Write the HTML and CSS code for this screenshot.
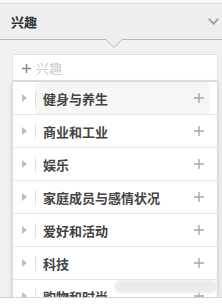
FILE: index.html
```html
<!DOCTYPE html>
<html lang="zh">
<head>
<meta charset="utf-8">
<link rel="stylesheet" href="styles.css">
</head>
<body>
<div class="screen">
  <div class="topgap"></div>
  <div class="header">
    <span class="title">兴趣</span>
    <svg class="chev" width="11" height="7" viewBox="0 0 11 7"><path d="M0.8 0.8 L5.5 5.6 L10.2 0.8" fill="none" stroke="#9a9a9a" stroke-width="1.8"/></svg>
  </div>
  <div class="content">
    <div class="input">
      <svg class="iplus" width="9" height="9" viewBox="0 0 9 9"><path d="M4.5 0 V9 M0 4.5 H9" stroke="#8a8a8a" stroke-width="1.6"/></svg>
      <span class="ph">兴趣</span>
    </div>
    <ul class="menu">
      <li class="item active"><span class="arrow"></span><span class="sep"></span><span class="label">健身与养生</span><svg class="add" width="10" height="10" viewBox="0 0 10 10"><path d="M5 0 V10 M0 5 H10" stroke="#a8a8a8" stroke-width="1.4"/></svg></li>
      <li class="item"><span class="arrow"></span><span class="sep"></span><span class="label">商业和工业</span><svg class="add" width="10" height="10" viewBox="0 0 10 10"><path d="M5 0 V10 M0 5 H10" stroke="#a8a8a8" stroke-width="1.4"/></svg></li>
      <li class="item"><span class="arrow"></span><span class="sep"></span><span class="label">娱乐</span><svg class="add" width="10" height="10" viewBox="0 0 10 10"><path d="M5 0 V10 M0 5 H10" stroke="#a8a8a8" stroke-width="1.4"/></svg></li>
      <li class="item"><span class="arrow"></span><span class="sep"></span><span class="label">家庭成员与感情状况</span><svg class="add" width="10" height="10" viewBox="0 0 10 10"><path d="M5 0 V10 M0 5 H10" stroke="#a8a8a8" stroke-width="1.4"/></svg></li>
      <li class="item"><span class="arrow"></span><span class="sep"></span><span class="label">爱好和活动</span><svg class="add" width="10" height="10" viewBox="0 0 10 10"><path d="M5 0 V10 M0 5 H10" stroke="#a8a8a8" stroke-width="1.4"/></svg></li>
      <li class="item"><span class="arrow"></span><span class="sep"></span><span class="label">科技</span><svg class="add" width="10" height="10" viewBox="0 0 10 10"><path d="M5 0 V10 M0 5 H10" stroke="#a8a8a8" stroke-width="1.4"/></svg></li>
      <li class="item"><span class="arrow"></span><span class="sep"></span><span class="label">购物和时尚</span><svg class="add" width="10" height="10" viewBox="0 0 10 10"><path d="M5 0 V10 M0 5 H10" stroke="#a8a8a8" stroke-width="1.4"/></svg></li>
    </ul>
  </div>
  <div class="blob"></div>
</div>
</body>
</html>
```

FILE: styles.css
```css
html, body {
  margin: 0;
  padding: 0;
  background: #ffffff;
  font-family: "Noto Sans CJK SC", "Noto Sans", sans-serif;
}

.screen {
  position: relative;
  height: 297px;
  overflow: hidden;
  background: #f1f1f1;
  border-bottom: 1px solid #d2d2d2;
}

.topgap {
  height: 3px;
  background: #f9f9f9;
  border-bottom: 1px solid #dcdcdc;
}

.header {
  position: relative;
  height: 35px;
  background: #eeeeee;
  border-bottom: 1px solid #b9b9b9;
  display: flex;
  align-items: center;
  justify-content: space-between;
  padding: 0 3px 0 11px;
}

.header::before {
  content: "";
  position: absolute;
  left: 105px;
  top: 35px;
  border-left: 9px solid transparent;
  border-right: 9px solid transparent;
  border-top: 9px solid #b9b9b9;
}

.header::after {
  content: "";
  position: absolute;
  left: 106px;
  top: 35px;
  border-left: 8px solid transparent;
  border-right: 8px solid transparent;
  border-top: 8px solid #eeeeee;
}

.title {
  font-size: 13px;
  font-weight: bold;
  color: #333333;
  line-height: 1;
}

.chev {
  display: block;
}

.content {
  padding: 14px 4px 0 12px;
}

.input {
  box-sizing: border-box;
  height: 27px;
  background: #ffffff;
  border: 1px solid #e2e2e2;
  display: flex;
  align-items: center;
  padding-left: 9px;
}

.iplus {
  display: block;
  margin-top: 1px;
}

.ph {
  margin-left: 5px;
  font-size: 13px;
  color: #cccccc;
  line-height: 1;
}

.menu {
  margin: 0;
  padding: 0;
  list-style: none;
  background: #ffffff;
  border: 1px solid #d8d8d8;
  box-shadow: 0 2px 5px rgba(0, 0, 0, 0.15);
}

.item {
  box-sizing: border-box;
  height: 33px;
  border-bottom: 1px solid #e6e6e6;
  display: flex;
  align-items: center;
  padding-left: 9px;
}

.item.active {
  background: linear-gradient(to right, #ffffff 22px, #f6f6f6 22px, #f6f6f6 197px, #ffffff 197px);
}

.arrow {
  width: 0;
  height: 0;
  border-left: 5px solid #bdbdbd;
  border-top: 4px solid transparent;
  border-bottom: 4px solid transparent;
}

.sep {
  width: 1px;
  height: 15px;
  margin-left: 8px;
  background: #e0e0e0;
}

.label {
  margin-left: 7px;
  font-size: 13px;
  font-weight: bold;
  color: #444444;
  line-height: 1;
}

.add {
  display: block;
  margin-left: auto;
  margin-right: 13px;
}

.blob {
  position: absolute;
  left: 114px;
  top: 280px;
  width: 104px;
  height: 13px;
  border-radius: 7px;
  background: #ececec;
  filter: blur(1px);
}
```
